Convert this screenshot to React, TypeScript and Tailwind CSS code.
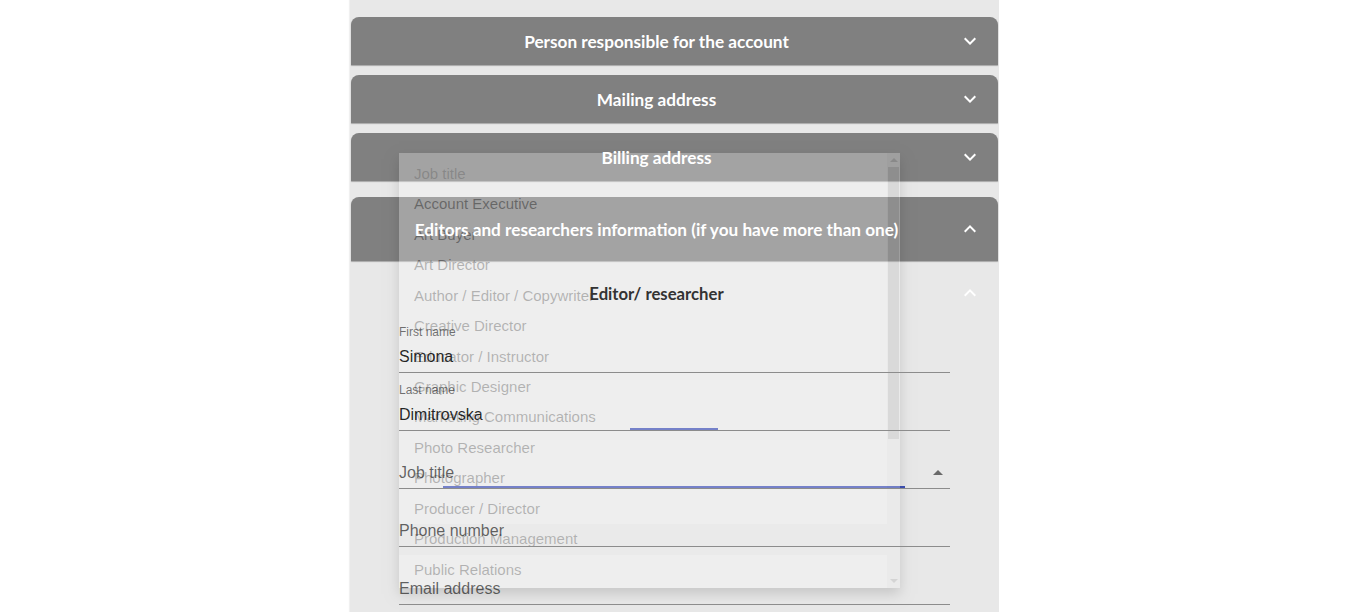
import React from "react";

const jobTitles = [
  "Job title",
  "Account Executive",
  "Art Buyer",
  "Art Director",
  "Author / Editor / Copywriter",
  "Creative Director",
  "Educator / Instructor",
  "Graphic Designer",
  "Marketing Communications",
  "Photo Researcher",
  "Photographer",
  "Producer / Director",
  "Production Management",
  "Public Relations",
];

function ExpandMore({ className = "" }: { className?: string }) {
  return (
    <svg viewBox="0 0 24 24" className={className} fill="currentColor">
      <path d="M16.59 8.59 12 13.17 7.41 8.59 6 10l6 6 6-6z" />
    </svg>
  );
}

function ExpandLess({ className = "" }: { className?: string }) {
  return (
    <svg viewBox="0 0 24 24" className={className} fill="currentColor">
      <path d="M12 8l-6 6 1.41 1.41L12 10.83l4.59 4.58L18 14z" />
    </svg>
  );
}

function SectionHeader({ title, expanded = false, first = false }: { title: string; expanded?: boolean; first?: boolean }) {
  return (
    <div
      className={`flex items-center rounded-t-lg bg-[#808080] px-4 shadow-[0_1px_1px_rgba(0,0,0,0.28)] ${
        expanded ? "mt-4 h-16" : first ? "h-12" : "mt-[10px] h-12"
      }`}
    >
      <span className="relative z-10 flex-1 pt-0.5 text-center font-['Lato',sans-serif] text-[17.2px] font-bold text-white">
        {title}
      </span>
      <span className="relative z-10 -mr-3 flex h-12 w-12 items-center justify-center text-white">
        {expanded ? <ExpandLess className="h-6 w-6" /> : <ExpandMore className="h-6 w-6" />}
      </span>
    </div>
  );
}

interface FieldProps {
  label: string;
  value?: string;
  select?: boolean;
  focusLine?: string;
}

function Field({ label, value, select, focusLine }: FieldProps) {
  return (
    <div className="pt-[9px] font-['Liberation_Sans',Arial,sans-serif]">
      <div className="relative z-10 h-4 text-xs leading-4 text-black/55">{value ? label : ""}</div>
      <div className="relative z-10 flex h-[33px] items-center border-b border-[#8c8c8c] pt-px text-base">
        <span className={`flex-1 ${value ? "text-black/85" : "text-black/60"}`}>{value ?? label}</span>
        {select && (
          <svg viewBox="0 0 24 24" className="h-6 w-6 text-black/55" fill="currentColor">
            <path d="M7 14l5-5 5 5z" />
          </svg>
        )}
      </div>
      {focusLine && <div className={`-mt-[3px] mb-px h-[2px] bg-[#3f51b5] ${focusLine}`} />}
    </div>
  );
}

function JobMenu() {
  return (
    <div className="absolute left-[49px] top-[153px] z-[5] flex h-[435px] w-[501px] bg-white opacity-[0.28] shadow-[0_6px_12px_rgba(0,0,0,0.5)] font-['Liberation_Sans',Arial,sans-serif]">
      <ul className="flex-1 pt-[6px]">
        {jobTitles.map((t, i) => (
          <li
            key={t}
            className={`flex h-[30.45px] items-center pl-[15px] text-[15px] ${
              i === 0 ? "text-black/40" : "text-black/85"
            } ${t === "Production Management" ? "bg-black/5" : ""}`}
          >
            {t}
          </li>
        ))}
      </ul>
      <div className="flex w-[13px] flex-col bg-[#f1f1f1]">
        <div className="flex h-[14px] items-center justify-center">
          <div className="h-0 w-0 border-x-[4px] border-b-[4px] border-x-transparent border-b-[#a3a3a3]" />
        </div>
        <div className="mx-px h-[272px] bg-[#b3b3b3]" />
        <div className="flex-1" />
        <div className="flex h-[14px] items-center justify-center">
          <div className="h-0 w-0 border-x-[4px] border-t-[4px] border-x-transparent border-t-[#a3a3a3]" />
        </div>
      </div>
    </div>
  );
}

export default function App() {
  return (
    <div className="h-[612px] overflow-hidden bg-white pl-[350px]">
      <div className="relative h-[700px] w-[649px] bg-[#e8e8e8] px-px pt-[17px] shadow-[-1px_0_1px_rgba(0,0,0,0.06)]">
        <SectionHeader title="Person responsible for the account" first />
        <SectionHeader title="Mailing address" />
        <SectionHeader title="Billing address" />
        <SectionHeader title="Editors and researchers information (if you have more than one)" expanded />

        <div className="flex h-16 items-center px-4">
          <span className="relative z-10 flex-1 pt-1 text-center font-['Lato',sans-serif] text-[16.7px] font-bold text-[#333333]">
            Editor/ researcher
          </span>
          <span className="relative z-10 -mr-3 flex h-12 w-12 items-center justify-center text-white">
            <ExpandLess className="h-6 w-6" />
          </span>
        </div>

        <div className="-mt-[10px] px-12">
          <Field label="First name" value="Simona" />
          <Field label="Last name" value="Dimitrovska" focusLine="ml-[231px] w-[88px]" />
          <Field label="Job title" select focusLine="ml-[44px] w-[462px]" />
          <Field label="Phone number" />
          <Field label="Email address" />
        </div>

        <JobMenu />
      </div>
    </div>
  );
}
